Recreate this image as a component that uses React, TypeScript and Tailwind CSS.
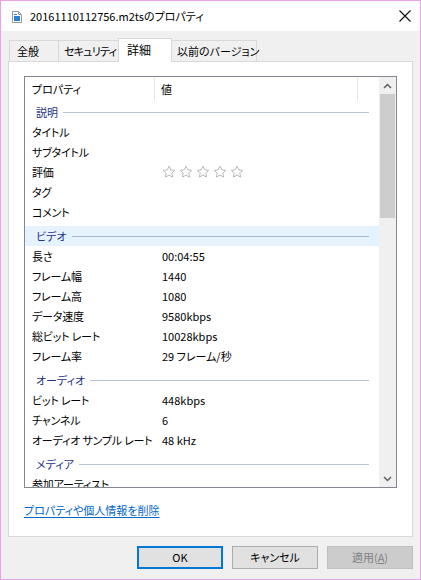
import React from "react";

const font = "font-['Noto_Sans_CJK_JP','Noto_Sans',sans-serif] [font-feature-settings:'palt']";

type Row = { label: string; value?: string; stars?: boolean };
type Group = { title: string; rows: Row[]; active?: boolean; first?: boolean };

const groups: Group[] = [
  {
    title: "説明",
    first: true,
    rows: [
      { label: "タイトル" },
      { label: "サブタイトル" },
      { label: "評価", stars: true },
      { label: "タグ" },
      { label: "コメント" },
    ],
  },
  {
    title: "ビデオ",
    active: true,
    rows: [
      { label: "長さ", value: "00:04:55" },
      { label: "フレーム幅", value: "1440" },
      { label: "フレーム高", value: "1080" },
      { label: "データ速度", value: "9580kbps" },
      { label: "総ビット レート", value: "10028kbps" },
      { label: "フレーム率", value: "29 フレーム/秒" },
    ],
  },
  {
    title: "オーディオ",
    rows: [
      { label: "ビット レート", value: "448kbps" },
      { label: "チャンネル", value: "6" },
      { label: "オーディオ サンプル レート", value: "48 kHz" },
    ],
  },
  {
    title: "メディア",
    rows: [{ label: "参加アーティスト" }],
  },
];

function Star() {
  return (
    <svg width="14" height="14" viewBox="0 0 24 24" fill="none">
      <path
        d="M12 2l3 6.3 6.9.9-5.1 4.7 1.3 6.8L12 17.4l-6.1 3.3 1.3-6.8-5.1-4.7 6.9-.9z"
        stroke="#b0b0b0"
        strokeWidth="1.5"
        strokeLinejoin="round"
      />
    </svg>
  );
}

function FileIcon() {
  return (
    <svg width="10" height="12" viewBox="0 0 10 12">
      <path d="M0.5 0.5h6l3 3v8h-9z" fill="#fff" stroke="#9a9a9a" />
      <path d="M6.5 0.5v3h3" fill="none" stroke="#9a9a9a" />
      <rect x="2" y="5" width="6" height="5" fill="#2a7fd4" />
      <rect x="2" y="3" width="3" height="1" fill="#2a7fd4" />
    </svg>
  );
}

function Chevron({ down }: { down?: boolean }) {
  return (
    <svg width="9" height="6" viewBox="0 0 9 6" className={down ? "rotate-180" : ""}>
      <path d="M1 5l3.5-3.5L8 5" fill="none" stroke="#606060" strokeWidth="1.5" />
    </svg>
  );
}

export default function App() {
  return (
    <div className={`${font} flex h-[580px] w-[421px] flex-col overflow-hidden border border-[#e8a2e8] bg-[#f0f0f0]`}>
      {/* title bar */}
      <div className="flex h-[30px] shrink-0 items-center bg-white">
        <div className="ml-[11px] mt-[1px] flex">
          <FileIcon />
        </div>
        <span className="ml-[8px] text-[11px] text-black">20161110112756.m2tsのプロパティ</span>
        <div className="ml-auto mr-[9px] flex">
          <svg width="12" height="12" viewBox="0 0 12 12">
            <path d="M0.5 0.5l11 11M11.5 0.5l-11 11" stroke="#111" strokeWidth="1.1" />
          </svg>
        </div>
      </div>

      {/* tabs */}
      <div className="mt-[7px] flex h-[23px] shrink-0 items-end pl-[8px] text-[11px] text-black">
        <div className="h-[21px] w-[50px] whitespace-nowrap border border-b-0 border-[#d9d9d9] bg-[#f0f0f0] pl-[7px] leading-[21px]">
          全般
        </div>
        <div className="-ml-px h-[21px] w-[62px] whitespace-nowrap border border-b-0 border-[#d9d9d9] bg-[#f0f0f0] pl-[5px] leading-[21px] tracking-[-0.8px]">
          セキュリティ
        </div>
        <div className="relative z-10 -mb-px -ml-[2px] h-[24px] w-[54px] whitespace-nowrap border border-b-0 border-[#d9d9d9] bg-white pl-[8px] pt-[1px] text-[12px] leading-[20px]">
          詳細
        </div>
        <div className="-ml-[2px] h-[21px] w-[87px] whitespace-nowrap border border-b-0 border-[#d9d9d9] bg-[#f0f0f0] pl-[6px] leading-[21px]">
          以前のバージョン
        </div>
      </div>

      {/* panel */}
      <div className="mx-[7px] flex h-[476px] shrink-0 flex-col border border-[#d9d9d9] bg-white px-[15px] pt-[14px]">
        <div className="flex h-[412px] border border-[#828790]">
          <div className="flex min-w-0 flex-1 flex-col overflow-hidden">
            {/* header */}
            <div className="flex h-[25px] shrink-0 items-stretch text-[11px] text-black">
              <div className="my-[1px] flex w-[130px] items-center border-r border-[#e5e5e5] pl-[7px]">プロパティ</div>
              <div className="my-[1px] flex w-[203px] items-center border-r border-[#e5e5e5] pl-[6px]">値</div>
            </div>
            {groups.map((g) => (
              <div key={g.title} className="flex flex-col">
                <div
                  className={`${g.first ? "" : "mt-[4px]"} flex h-[20px] shrink-0 items-center pl-[11px] pr-[10px] ${
                    g.active ? "bg-[#e5f3ff]" : ""
                  }`}
                >
                  <span className="text-[11px] text-[#1e3287]">{g.title}</span>
                  <div className={`ml-[5px] h-px flex-1 ${g.active ? "bg-[#a5b7cd]" : "bg-[#b7c4d2]"}`} />
                </div>
                {g.rows.map((r) => (
                  <div key={r.label} className="flex h-[20px] shrink-0 items-center text-[11px] text-black">
                    <div className="w-[137px] whitespace-nowrap pl-[7px] tracking-[-0.2px]">{r.label}</div>
                    <div className="flex items-center gap-[3px]">
                      {r.stars ? (
                        <>
                          <Star />
                          <Star />
                          <Star />
                          <Star />
                          <Star />
                        </>
                      ) : (
                        r.value
                      )}
                    </div>
                  </div>
                ))}
              </div>
            ))}
          </div>
          {/* scrollbar */}
          <div className="flex w-[17px] shrink-0 flex-col bg-[#f0f0f0]">
            <div className="flex h-[17px] items-center justify-center">
              <Chevron />
            </div>
            <div className="mx-[1px] h-[124px] bg-[#cdcdcd]" />
            <div className="flex-1" />
            <div className="flex h-[17px] items-center justify-center">
              <Chevron down />
            </div>
          </div>
        </div>
        <div className="mt-[8px]">
          <span className="text-[11px] text-[#0066cc] underline underline-offset-2">プロパティや個人情報を削除</span>
        </div>
      </div>

      {/* buttons */}
      <div className="mt-[9px] flex justify-end gap-[9px] pr-[7px]">
        <div className="flex h-[23px] w-[86px] items-center justify-center border-2 border-[#0078d7] bg-[#e1e1e1] text-[11px] text-black">
          OK
        </div>
        <div className="flex h-[23px] w-[86px] items-center justify-center border border-[#adadad] bg-[#e1e1e1] text-[11px] text-black">
          キャンセル
        </div>
        <div className="flex h-[23px] w-[86px] items-center justify-center border border-[#bfbfbf] bg-[#cccccc] text-[11px] text-[#838383]">
          適用(<span className="underline">A</span>)
        </div>
      </div>
    </div>
  );
}
